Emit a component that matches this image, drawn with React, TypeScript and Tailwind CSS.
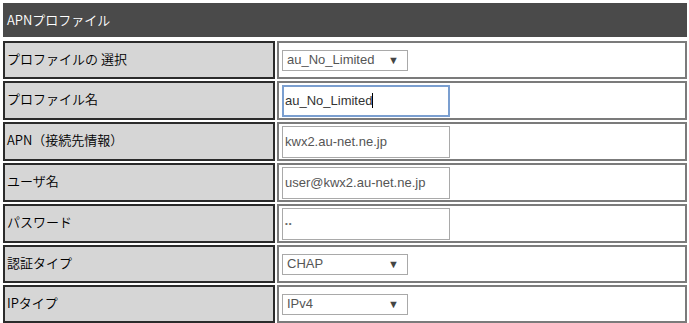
import React from 'react';

type Row = {
  label: string;
  kind: 'select' | 'input' | 'password';
  value: string;
  focused?: boolean;
};

const rows: Row[] = [
  { label: 'プロファイルの 選択', kind: 'select', value: 'au_No_Limited' },
  { label: 'プロファイル名', kind: 'input', value: 'au_No_Limited', focused: true },
  { label: 'APN（接続先情報）', kind: 'input', value: 'kwx2.au-net.ne.jp' },
  { label: 'ユーザ名', kind: 'input', value: 'user@kwx2.au-net.ne.jp' },
  { label: 'パスワード', kind: 'password', value: '••' },
  { label: '認証タイプ', kind: 'select', value: 'CHAP' },
  { label: 'IPタイプ', kind: 'select', value: 'IPv4' },
];

const jp = { fontFamily: '"Noto Sans CJK JP", "Liberation Sans", sans-serif' };
const latin = { fontFamily: '"Liberation Sans", "Noto Sans CJK JP", sans-serif' };

const FakeSelect: React.FC<{ value: string }> = ({ value }) => (
  <div
    className="w-[126px] h-[21px] border border-[#a9a9a9] bg-white flex items-center justify-between pl-[4px] pr-[8px] text-[13px] text-[#555]"
    style={latin}
  >
    <span>{value}</span>
    <span className="text-[11px] text-[#444]">▼</span>
  </div>
);

const FakeInput: React.FC<{ value: string; focused?: boolean; password?: boolean }> = ({ value, focused, password }) => (
  <div
    className={`w-[168px] h-[32px] flex items-center text-[13px] ${
      focused
        ? 'border-2 border-[#7b9fd0] text-[#333] pl-[1px]'
        : 'border border-[#a9a9a9] text-[#555] pl-[2px]'
    }`}
    style={latin}
  >
    {password ? <span className="text-[8px] tracking-[1px] text-[#666]">{value}</span> : <span>{value}</span>}
    {focused && <span className="w-px h-[15px] bg-black" />}
  </div>
);

export default function App() {
  return (
    <div className="w-[689px] h-[323px] bg-white overflow-hidden pt-[3px] pl-[3px]">
      <div
        className="w-[684px] h-[34px] bg-[#4a4a4a] flex items-center pl-[4px] text-white text-[13px] font-[350]"
        style={jp}
      >
        APNプロファイル
      </div>
      <div className="mt-[4px] flex flex-col gap-[2px] w-[684px]">
        {rows.map((r) => (
          <div key={r.label} className={`flex gap-[2px] ${r.kind === 'select' ? 'h-[38px]' : 'h-[39px]'}`}>
            <div
              className="w-[272px] border-2 border-[#2b2b2b] bg-[#d6d6d6] flex items-center pl-[2px] pb-[3px] text-[13px] font-[350] text-black"
              style={jp}
            >
              {r.label}
            </div>
            <div className="flex-1 border-2 border-[#7b7b7b] bg-white flex items-center pl-[3px]">
              {r.kind === 'select' ? (
                <FakeSelect value={r.value} />
              ) : (
                <FakeInput value={r.value} focused={r.focused} password={r.kind === 'password'} />
              )}
            </div>
          </div>
        ))}
      </div>
    </div>
  );
}
